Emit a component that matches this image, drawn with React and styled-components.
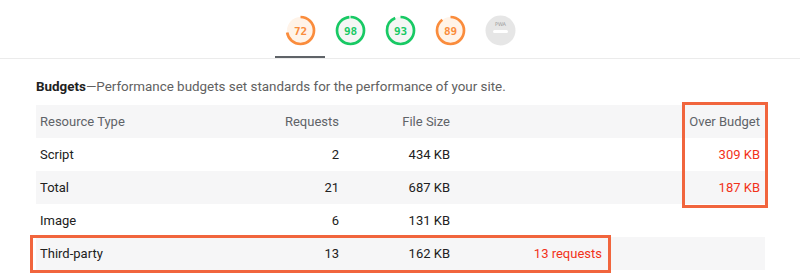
import React from "react";
import styled, { createGlobalStyle } from "styled-components";

const GlobalStyle = createGlobalStyle`
  body {
    margin: 0;
    background: #ffffff;
    font-family: Roboto, "Liberation Sans", Arial, sans-serif;
  }
`;

const colors = {
  orange: "#fa8c3c",
  orangeFill: "#fff3e8",
  green: "#18c964",
  greenFill: "#f4f6f4",
  text: "#212121",
  muted: "#616161",
  red: "#f2321a",
  stripe: "#f6f6f7",
  mark: "#f1653d",
};

const Page = styled.div`
  width: 800px;
  height: 278px;
  overflow: hidden;
`;

const GaugeBar = styled.div`
  display: flex;
  justify-content: center;
  height: 58px;
  border-bottom: 1px solid #ebebeb;
`;

const GaugeSlot = styled.div`
  width: 50px;
  display: flex;
  justify-content: center;
  padding-top: 15px;
  box-sizing: border-box;
  border-bottom: 2px solid ${(p) => (p.$active ? "#5f6368" : "transparent")};
`;

const Section = styled.section`
  padding: 18px 35px 0 36px;
`;

const Intro = styled.p`
  margin: 0 0 8px;
  font-size: 13.4px;
  line-height: 20px;
  color: ${colors.muted};

  strong {
    color: ${colors.text};
    font-weight: 700;
  }
`;

const Table = styled.div`
  position: relative;
  display: grid;
  grid-template-columns: 224px 84px 111px 152px 158px;
`;

const Row = styled.div`
  display: contents;
`;

const Cell = styled.div`
  height: 33px;
  display: flex;
  align-items: center;
  justify-content: ${(p) => (p.$left ? "flex-start" : "flex-end")};
  padding: 0 5px 0 4px;
  font-size: 13px;
  color: ${(p) => (p.$head ? "#5f6368" : p.$over ? colors.red : colors.text)};
  background: ${(p) => (p.$stripe ? colors.stripe : "#ffffff")};
  white-space: nowrap;
`;

const Mark = styled.div`
  position: absolute;
  border: 3px solid ${colors.mark};
  box-sizing: border-box;
  pointer-events: none;
`;

function Gauge({ score, color, fill }) {
  const r = 13.5;
  const c = 2 * Math.PI * r;
  return (
    <svg width="31" height="31" viewBox="0 0 31 31">
      <circle cx="15.5" cy="15.5" r={r} fill={fill} stroke="none" />
      <circle
        cx="15.5"
        cy="15.5"
        r={r}
        fill="none"
        stroke={color}
        strokeWidth="2.7"
        strokeDasharray={`${(c * score) / 100} ${c}`}
        transform="rotate(-90 15.5 15.5)"
      />
      <text
        x="15.5"
        y="19.5"
        textAnchor="middle"
        fontSize="11"
        fontWeight="700"
        fontFamily='"DejaVu Sans Mono", "Liberation Mono", monospace'
        fill={color}
      >
        {score}
      </text>
    </svg>
  );
}

function PwaBadge() {
  return (
    <svg width="31" height="31" viewBox="0 0 31 31">
      <circle cx="15.5" cy="15.5" r="15" fill="#e6e6e6" />
      <text
        x="15.5"
        y="11"
        textAnchor="middle"
        fontSize="5"
        fontFamily='"DejaVu Sans", sans-serif'
        fill="#9a9a9a"
      >
        PWA
      </text>
      <rect x="8" y="15" width="15" height="3" rx="1.5" fill="#ffffff" />
    </svg>
  );
}

const gauges = [
  { score: 72, color: colors.orange, fill: colors.orangeFill },
  { score: 98, color: colors.green, fill: colors.greenFill },
  { score: 93, color: colors.green, fill: colors.greenFill },
  { score: 89, color: colors.orange, fill: colors.orangeFill },
];

const rows = [
  { type: "Script", requests: "2", size: "434 KB", reqOver: "", sizeOver: "309 KB" },
  { type: "Total", requests: "21", size: "687 KB", reqOver: "", sizeOver: "187 KB" },
  { type: "Image", requests: "6", size: "131 KB", reqOver: "", sizeOver: "" },
  { type: "Third-party", requests: "13", size: "162 KB", reqOver: "13 requests", sizeOver: "" },
];

export default function App() {
  return (
    <Page>
      <GlobalStyle />
      <GaugeBar>
        {gauges.map((g, i) => (
          <GaugeSlot key={i} $active={i === 0}>
            <Gauge {...g} />
          </GaugeSlot>
        ))}
        <GaugeSlot>
          <PwaBadge />
        </GaugeSlot>
      </GaugeBar>
      <Section>
        <Intro>
          <strong>Budgets</strong>—Performance budgets set standards for the
          performance of your site.
        </Intro>
        <Table>
          <Row>
            <Cell $head $left $stripe>Resource Type</Cell>
            <Cell $head $stripe>Requests</Cell>
            <Cell $head $stripe>File Size</Cell>
            <Cell $head $stripe></Cell>
            <Cell $head $stripe>Over Budget</Cell>
          </Row>
          {rows.map((r, i) => {
            const stripe = i % 2 === 1;
            return (
              <Row key={r.type}>
                <Cell $left $stripe={stripe}>{r.type}</Cell>
                <Cell $stripe={stripe}>{r.requests}</Cell>
                <Cell $stripe={stripe}>{r.size}</Cell>
                <Cell $stripe={stripe} $over>{r.reqOver}</Cell>
                <Cell $stripe={stripe} $over>{r.sizeOver}</Cell>
              </Row>
            );
          })}
          <Mark style={{ left: 646, top: -3, width: 86, height: 106 }} />
          <Mark style={{ left: -6, top: 130, width: 581, height: 38 }} />
        </Table>
      </Section>
    </Page>
  );
}
